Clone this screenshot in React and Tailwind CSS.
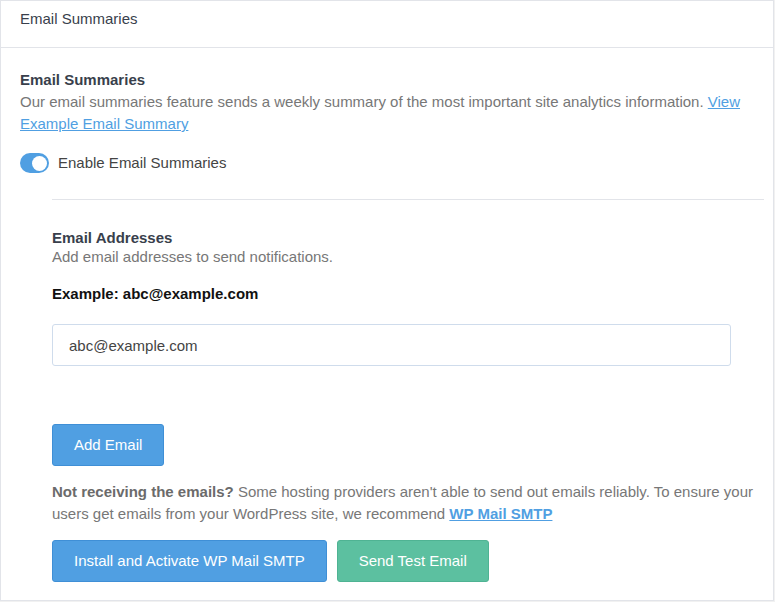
import React, { useState } from "react";

const FONT = { fontFamily: '"Liberation Sans", Arial, sans-serif' };

function Toggle({ on, onChange }) {
  return (
    <button
      type="button"
      onClick={() => onChange(!on)}
      className={`relative flex h-[20px] w-[29px] shrink-0 items-center rounded-full px-[2px] ${
        on ? "justify-end bg-[#509fe2]" : "justify-start bg-[#c9ced6]"
      }`}
    >
      <span className="block h-[15px] w-[15px] rounded-full bg-white" />
    </button>
  );
}

export default function App() {
  const [enabled, setEnabled] = useState(true);
  const [email, setEmail] = useState("abc@example.com");

  return (
    <div style={FONT} className="h-[602px] w-[775px] bg-[#f1f1f1] text-[15px]">
      <div className="flex h-[601px] w-[774px] flex-col border border-[#e2e4e9] bg-white">
        {/* card header */}
        <div className="h-[47px] border-b border-[#e2e4e9] px-[19px] pt-[8px] leading-[20px] text-[#393f4c]">
          Email Summaries
        </div>

        <div className="flex flex-col px-[19px] pt-[21px]">
          <h2 className="font-bold leading-[22px] text-[#393f4c]">Email Summaries</h2>
          <p className="leading-[22px] text-[#777777]">
            Our email summaries feature sends a weekly summary of the most important site analytics
            information.{" "}
            <a href="#" className="text-[#509fe2] underline">
              View Example Email Summary
            </a>
          </p>

          <label className="mt-[17px] flex items-center gap-[9px] leading-[22px] text-[#444444]">
            <Toggle on={enabled} onChange={setEnabled} />
            Enable Email Summaries
          </label>

          {/* email settings */}
          <div className="ml-[32px] mr-[-10px] mt-[25px] border-t border-[#e2e4e9] pt-[29px]">
            <h3 className="font-bold leading-[18px] text-[#393f4c]">Email Addresses</h3>
            <p className="leading-[19px] text-[#777777]">Add email addresses to send notifications.</p>

            <p className="mt-[19px] font-bold leading-[18px] text-[#111111]">Example: abc@example.com</p>

            <input
              value={email}
              onChange={(e) => setEmail(e.target.value)}
              className="mt-[21px] h-[42px] w-[679px] rounded-[3px] border border-[#cfdcec] px-[16px] text-[15px] text-[#444444] outline-none"
              style={FONT}
            />

            <button
              type="button"
              className="mt-[58px] block h-[42px] rounded-[3px] border border-[#3f8fd6] bg-[#509fe2] px-[21px] text-white"
            >
              Add Email
            </button>

            <p className="mt-[15px] leading-[22px] text-[#777777]">
              <b className="text-[#6b6b6b]">Not receiving the emails?</b> Some hosting providers aren't
              able to send out emails reliably. To ensure your users get emails from your WordPress site,
              we recommend{" "}
              <a href="#" className="font-bold text-[#509fe2] underline">
                WP Mail SMTP
              </a>
            </p>

            <div className="mt-[15px] flex gap-[10px]">
              <button
                type="button"
                className="h-[42px] rounded-[3px] border border-[#3f8fd6] bg-[#509fe2] px-[21px] text-white"
              >
                Install and Activate WP Mail SMTP
              </button>
              <button
                type="button"
                className="h-[42px] rounded-[3px] border border-[#4fb393] bg-[#5cc0a0] px-[21px] text-white"
              >
                Send Test Email
              </button>
            </div>
          </div>
        </div>
      </div>
    </div>
  );
}
